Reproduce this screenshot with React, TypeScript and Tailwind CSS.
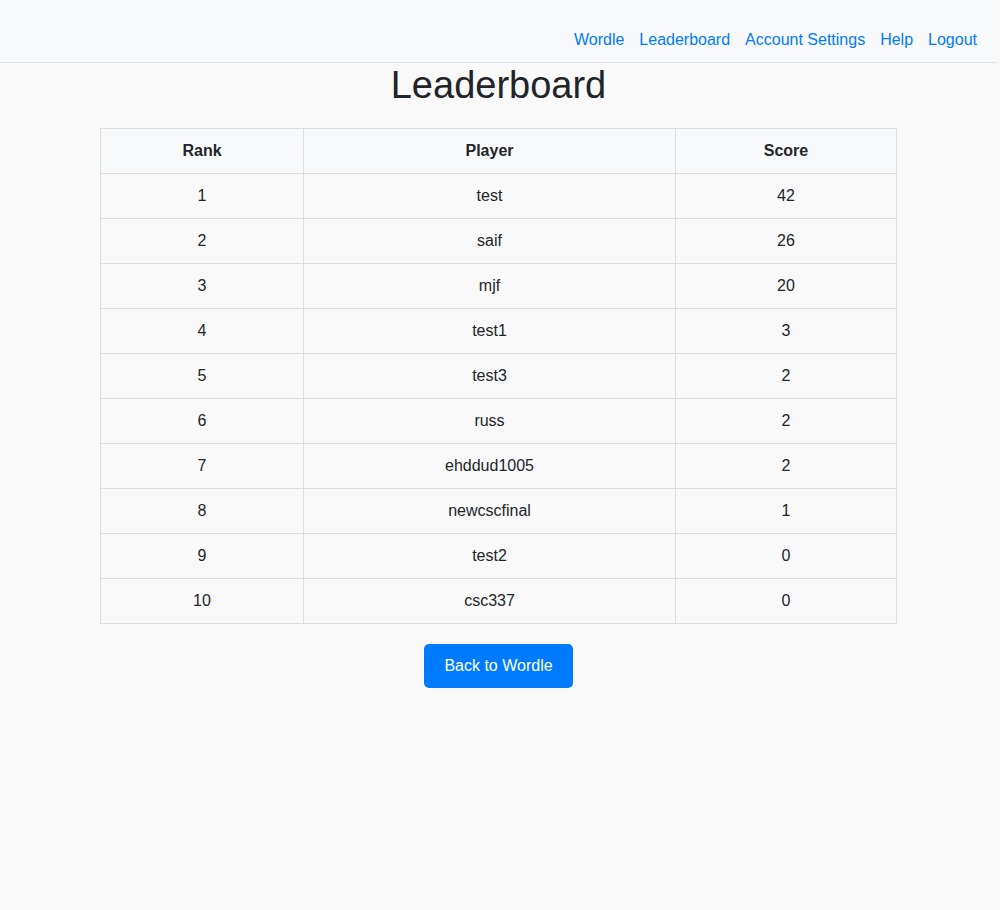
import React from "react";

const players = [
  { rank: 1, name: "test", score: 42 },
  { rank: 2, name: "saif", score: 26 },
  { rank: 3, name: "mjf", score: 20 },
  { rank: 4, name: "test1", score: 3 },
  { rank: 5, name: "test3", score: 2 },
  { rank: 6, name: "russ", score: 2 },
  { rank: 7, name: "ehddud1005", score: 2 },
  { rank: 8, name: "newcscfinal", score: 1 },
  { rank: 9, name: "test2", score: 0 },
  { rank: 10, name: "csc337", score: 0 },
];

const links = ["Wordle", "Leaderboard", "Account Settings", "Help", "Logout"];

export default function App() {
  return (
    <div className="min-h-[910px] bg-[#f9f9f9] text-[#212529] font-['Liberation_Sans',Arial,sans-serif]">
      <div className="w-[997px]">
        {/* nav */}
        <nav className="h-[63px] bg-[#f8f9fa] border-b border-[#dee2e6] flex items-end justify-end pr-[20px] pb-[10px]">
          <ul className="flex gap-[15px] text-[16px] leading-[24px]">
            {links.map((l) => (
              <li key={l}>
                <a href="#" className="text-[#007bff]">
                  {l}
                </a>
              </li>
            ))}
          </ul>
        </nav>

        <h1 className="text-center text-[38px] leading-[44px] font-normal mt-0 mb-[21px]">
          Leaderboard
        </h1>

        <table className="ml-[100px] w-[797px] border-collapse text-[16px] text-center">
          <thead>
            <tr className="h-[45px] bg-[#f8f9fa]">
              <th className="w-[203px] border border-[#dddddd] font-bold">Rank</th>
              <th className="w-[372px] border border-[#dddddd] font-bold">Player</th>
              <th className="border border-[#dddddd] font-bold">Score</th>
            </tr>
          </thead>
          <tbody>
            {players.map((p) => (
              <tr key={p.rank} className="h-[45px]">
                <td className="border border-[#dddddd]">{p.rank}</td>
                <td className="border border-[#dddddd]">{p.name}</td>
                <td className="border border-[#dddddd]">{p.score}</td>
              </tr>
            ))}
          </tbody>
        </table>

        <div className="flex justify-center mt-[20px]">
          <button className="w-[149px] h-[44px] bg-[#007bff] text-white text-[16px] rounded-[5px]">
            Back to Wordle
          </button>
        </div>
      </div>
    </div>
  );
}
